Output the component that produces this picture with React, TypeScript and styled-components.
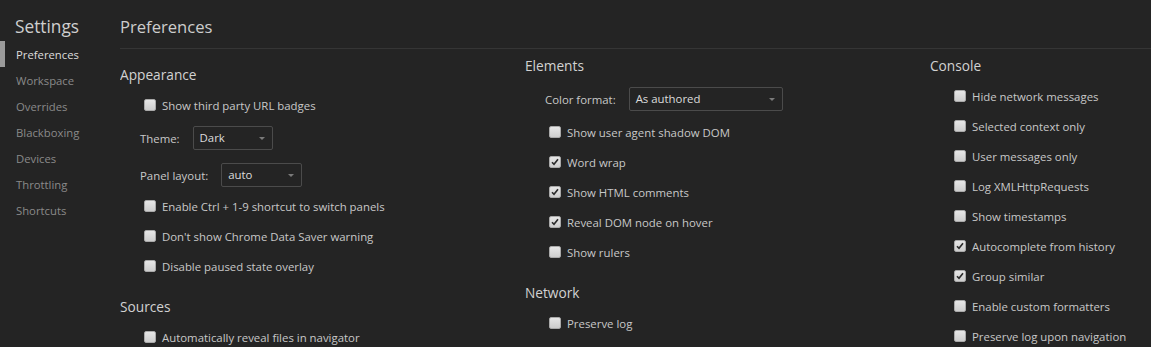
import React from "react";
import styled, { createGlobalStyle } from "styled-components";

const GlobalStyle = createGlobalStyle`
  html, body {
    margin: 0;
    background: #242424;
  }
  body {
    font-family: "Open Sans", "Noto Sans", sans-serif;
    color: #c8c8c8;
    overflow: hidden;
  }
`;

const Page = styled.div`
  display: flex;
  height: 347px;
  background: #242424;
`;

const Sidebar = styled.nav`
  width: 120px;
  flex-shrink: 0;
`;

const SideTitle = styled.h1`
  margin: 0;
  height: 41px;
  box-sizing: border-box;
  padding: 16px 0 0 15px;
  font-size: 17.3px;
  line-height: 22px;
  font-weight: 400;
  color: #cfcfcf;
`;

const SideItem = styled.div<{ $active?: boolean }>`
  height: 26px;
  line-height: 27px;
  font-size: 11.3px;
  padding-left: 11px;
  border-left: 5px solid ${(p) => (p.$active ? "#9a9a9a" : "transparent")};
  color: ${(p) => (p.$active ? "#dcdcdc" : "#8a8a8a")};
`;

const Main = styled.main`
  flex: 1;
  min-width: 0;
  overflow: hidden;
`;

const Header = styled.h2`
  margin: 0;
  height: 49px;
  box-sizing: border-box;
  padding-top: 16px;
  font-size: 16.6px;
  line-height: 22px;
  font-weight: 400;
  color: #cdcdcd;
  border-bottom: 1px solid #353535;
`;

const Columns = styled.div`
  display: grid;
  grid-template-columns: 405px 405px minmax(0, 1fr);
`;

const Column = styled.section<{ $top: number }>`
  padding-top: ${(p) => p.$top}px;
`;

const SectionTitle = styled.h3`
  margin: 11px 0 0;
  height: 30px;
  line-height: 30px;
  font-size: 13.7px;
  font-weight: 400;
  color: #d2d2d2;
  &:first-child {
    margin-top: 0;
  }
`;

const CheckRow = styled.label`
  display: flex;
  align-items: center;
  gap: 6px;
  height: 30px;
  padding-left: 24px;
  font-size: 11.4px;
  color: #c8c8c8;
  white-space: nowrap;
`;

const Box = styled.span`
  display: inline-flex;
  align-items: center;
  justify-content: center;
  width: 12px;
  height: 12px;
  box-sizing: border-box;
  border: 1px solid #a9a9a9;
  border-radius: 2px;
  background: linear-gradient(#e6e6e6, #cdcdcd);
  flex-shrink: 0;
`;

const SelectRow = styled.div<{ $mt: number; $mb: number }>`
  display: flex;
  align-items: center;
  gap: 13px;
  height: 30px;
  margin: ${(p) => p.$mt}px 0 ${(p) => p.$mb}px;
  padding-left: 20px;
  font-size: 11.4px;
  color: #c8c8c8;
  white-space: nowrap;
`;

const Select = styled.div<{ $width: number }>`
  position: relative;
  width: ${(p) => p.$width}px;
  height: 24px;
  box-sizing: border-box;
  border: 1px solid #4b4b4b;
  border-radius: 2px;
  padding-left: 6px;
  line-height: 22px;
  color: #dcdcdc;
  &::after {
    content: "";
    position: absolute;
    right: 7px;
    top: 10px;
    border-left: 3px solid transparent;
    border-right: 3px solid transparent;
    border-top: 3px solid #7a7a7a;
  }
`;

function Check({ label, checked }: { label: string; checked?: boolean }) {
  return (
    <CheckRow>
      <Box>
        {checked && (
          <svg width="8" height="8" viewBox="0 0 8 8">
            <path d="M1 4.2 L3 6.3 L7 1.2" fill="none" stroke="#2a2a2a" strokeWidth="1.6" />
          </svg>
        )}
      </Box>
      {label}
    </CheckRow>
  );
}

function Dropdown({
  label,
  value,
  width,
  mt = 3,
  mb = 3,
}: {
  label: string;
  value: string;
  width: number;
  mt?: number;
  mb?: number;
}) {
  return (
    <SelectRow $mt={mt} $mb={mb}>
      {label}
      <Select $width={width}>{value}</Select>
    </SelectRow>
  );
}

const sideItems = ["Preferences", "Workspace", "Overrides", "Blackboxing", "Devices", "Throttling", "Shortcuts"];

export default function App() {
  return (
    <>
      <GlobalStyle />
      <Page>
        <Sidebar>
          <SideTitle>Settings</SideTitle>
          {sideItems.map((s, i) => (
            <SideItem key={s} $active={i === 0}>
              {s}
            </SideItem>
          ))}
        </Sidebar>
        <Main>
          <Header>Preferences</Header>
          <Columns>
            <Column $top={11}>
              <SectionTitle>Appearance</SectionTitle>
              <Check label="Show third party URL badges" />
              <Dropdown label="Theme:" value="Dark" width={80} />
              <Dropdown label="Panel layout:" value="auto" width={81} mt={7} mb={1} />
              <Check label="Enable Ctrl + 1-9 shortcut to switch panels" />
              <Check label="Don't show Chrome Data Saver warning" />
              <Check label="Disable paused state overlay" />
              <SectionTitle>Sources</SectionTitle>
              <Check label="Automatically reveal files in navigator" />
            </Column>
            <Column $top={2}>
              <SectionTitle>Elements</SectionTitle>
              <Dropdown label="Color format:" value="As authored" width={154} />
              <Check label="Show user agent shadow DOM" />
              <Check label="Word wrap" checked />
              <Check label="Show HTML comments" checked />
              <Check label="Reveal DOM node on hover" checked />
              <Check label="Show rulers" />
              <SectionTitle>Network</SectionTitle>
              <Check label="Preserve log" />
            </Column>
            <Column $top={2}>
              <SectionTitle>Console</SectionTitle>
              <Check label="Hide network messages" />
              <Check label="Selected context only" />
              <Check label="User messages only" />
              <Check label="Log XMLHttpRequests" />
              <Check label="Show timestamps" />
              <Check label="Autocomplete from history" checked />
              <Check label="Group similar" checked />
              <Check label="Enable custom formatters" />
              <Check label="Preserve log upon navigation" />
            </Column>
          </Columns>
        </Main>
      </Page>
    </>
  );
}
